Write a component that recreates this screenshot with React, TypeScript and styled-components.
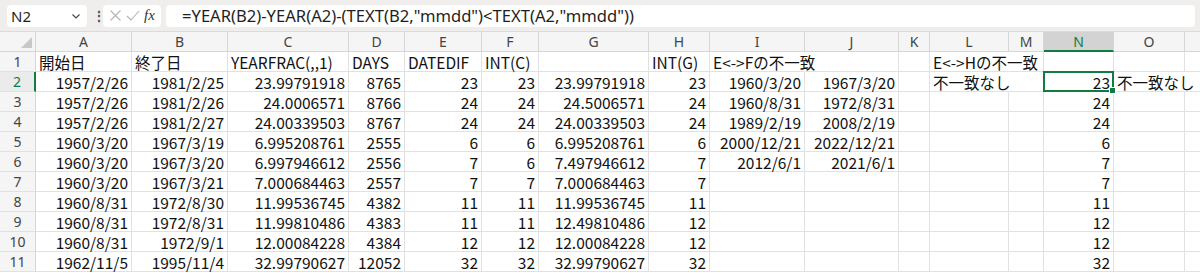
import React from 'react';
import styled, { createGlobalStyle, css } from 'styled-components';

const GlobalStyle = createGlobalStyle`
  html, body { margin: 0; padding: 0; background: #ffffff; }
  body { width: 1200px; height: 273px; overflow: hidden; }
`;

const COLS = [96, 96, 121, 56, 77, 57, 110, 61, 95, 94, 31, 79, 35, 70, 71, 64];
// the last column is only partly in view, so its letter is off-screen
const LETTERS = ['A', 'B', 'C', 'D', 'E', 'F', 'G', 'H', 'I', 'J', 'K', 'L', 'M', 'N', 'O', ''];
const GREEN = '#107c41';

type Cell = { v?: string; left?: boolean; spill?: boolean };

const n = (v: string): Cell => ({ v });
const t = (v: string, spill = false): Cell => ({ v, left: true, spill });
const e: Cell = {};

const ROWS: Cell[][] = [
  [t('開始日'), t('終了日'), t('YEARFRAC(,,1)'), t('DAYS'), t('DATEDIF'), t('INT(C)'), e, t('INT(G)'), t('E<->Fの不一致', true), e, e, t('E<->Hの不一致', true), e, e, e, e],
  [n('1957/2/26'), n('1981/2/25'), n('23.99791918'), n('8765'), n('23'), n('23'), n('23.99791918'), n('23'), n('1960/3/20'), n('1967/3/20'), e, t('不一致なし', true), e, n('23'), t('不一致なし', true), e],
  [n('1957/2/26'), n('1981/2/26'), n('24.0006571'), n('8766'), n('24'), n('24'), n('24.5006571'), n('24'), n('1960/8/31'), n('1972/8/31'), e, e, e, n('24'), e, e],
  [n('1957/2/26'), n('1981/2/27'), n('24.00339503'), n('8767'), n('24'), n('24'), n('24.00339503'), n('24'), n('1989/2/19'), n('2008/2/19'), e, e, e, n('24'), e, e],
  [n('1960/3/20'), n('1967/3/19'), n('6.995208761'), n('2555'), n('6'), n('6'), n('6.995208761'), n('6'), n('2000/12/21'), n('2022/12/21'), e, e, e, n('6'), e, e],
  [n('1960/3/20'), n('1967/3/20'), n('6.997946612'), n('2556'), n('7'), n('6'), n('7.497946612'), n('7'), n('2012/6/1'), n('2021/6/1'), e, e, e, n('7'), e, e],
  [n('1960/3/20'), n('1967/3/21'), n('7.000684463'), n('2557'), n('7'), n('7'), n('7.000684463'), n('7'), e, e, e, e, e, n('7'), e, e],
  [n('1960/8/31'), n('1972/8/30'), n('11.99536745'), n('4382'), n('11'), n('11'), n('11.99536745'), n('11'), e, e, e, e, e, n('11'), e, e],
  [n('1960/8/31'), n('1972/8/31'), n('11.99810486'), n('4383'), n('11'), n('11'), n('12.49810486'), n('12'), e, e, e, e, e, n('12'), e, e],
  [n('1960/8/31'), n('1972/9/1'), n('12.00084228'), n('4384'), n('12'), n('12'), n('12.00084228'), n('12'), e, e, e, e, e, n('12'), e, e],
  [n('1962/11/5'), n('1995/11/4'), n('32.99790627'), n('12052'), n('32'), n('32'), n('32.99790627'), n('32'), e, e, e, e, e, n('32'), e, e],
];

const Page = styled.div`
  width: 1200px;
  height: 273px;
  overflow: hidden;
  display: flex;
  flex-direction: column;
`;

const FormulaBar = styled.div`
  height: 32px;
  flex: none;
  box-sizing: border-box;
  display: flex;
  align-items: center;
  gap: 5px;
  padding: 4px 5px 4px 7px;
  background: #efeeed;
  border-bottom: 1px solid #dcdbda;
  font-family: 'Noto Sans', 'Open Sans', sans-serif;
  color: #1f1f1f;
`;

const Box = styled.div<{ $w?: number; $grow?: boolean }>`
  height: 22px;
  box-sizing: border-box;
  background: #ffffff;
  border-radius: 4px;
  display: flex;
  align-items: center;
  ${(p) => (p.$grow ? css`flex: 1;` : css`width: ${p.$w}px; flex: none;`)}
`;

const NameText = styled.span`
  flex: 1;
  padding-left: 4px;
  font-size: 15px;
`;

const Chevron = styled.svg`
  width: 10px;
  height: 10px;
  margin-right: 6px;
`;

const Dots = styled.span`
  width: 6px;
  font-size: 14px;
  color: #555;
  text-align: center;
  font-weight: bold;
`;

const IconRow = styled(Box)`
  justify-content: space-around;
  padding: 0 4px;
`;

const Fx = styled.span`
  font-family: 'Liberation Serif', serif;
  font-style: italic;
  font-size: 15px;
  color: #333;
`;

const FormulaText = styled.span`
  padding-left: 16px;
  font-size: 16.6px;
  white-space: pre;
`;

const Grid = styled.div`
  display: grid;
  grid-template-columns: 36px ${COLS.map((w) => `${w}px`).join(' ')};
  grid-auto-rows: 20px;
  background: #ffffff;
`;

const Corner = styled.div`
  background: #f5f5f5;
  border-right: 1px solid #d6d6d6;
  border-bottom: 1px solid #d6d6d6;
  box-sizing: border-box;
  display: flex;
  align-items: flex-end;
  justify-content: flex-end;
  padding: 0 3px 3px 0;
`;

const ColHead = styled.div<{ $sel?: boolean }>`
  box-sizing: border-box;
  background: ${(p) => (p.$sel ? '#d3d3d3' : '#f5f5f5')};
  border-right: 1px solid #d6d6d6;
  border-bottom: ${(p) => (p.$sel ? `2px solid ${GREEN}` : '1px solid #d6d6d6')};
  color: ${(p) => (p.$sel ? GREEN : '#444')};
  font-family: 'Noto Sans', 'Open Sans', sans-serif;
  font-size: 14px;
  line-height: 20px;
  text-align: center;
`;

const RowHead = styled.div<{ $sel?: boolean }>`
  box-sizing: border-box;
  background: ${(p) => (p.$sel ? '#ebebeb' : '#f5f5f5')};
  border-right: ${(p) => (p.$sel ? `2px solid ${GREEN}` : '1px solid #d6d6d6')};
  border-bottom: 1px solid #e1e1e1;
  color: ${(p) => (p.$sel ? GREEN : '#444')};
  font-family: 'Noto Sans', 'Open Sans', sans-serif;
  font-size: 14px;
  line-height: 20px;
  text-align: center;
`;

const DataCell = styled.div<{ $left?: boolean; $spill?: boolean; $active?: boolean }>`
  position: relative;
  box-sizing: border-box;
  border-right: 1px solid ${(p) => (p.$spill ? 'transparent' : '#e1e1e1')};
  border-bottom: 1px solid #e1e1e1;
  font-family: 'Noto Sans CJK JP', 'Noto Sans', sans-serif;
  font-size: 15.5px;
  line-height: 20px;
  color: #111;
  white-space: nowrap;
  overflow: visible;
  text-align: ${(p) => (p.$left ? 'left' : 'right')};
  padding: ${(p) => (p.$left ? '0 0 0 3px' : '0 3px 0 0')};
  ${(p) =>
    p.$active &&
    css`
      &::after {
        content: '';
        position: absolute;
        left: -1px;
        top: -1px;
        right: -1px;
        bottom: -1px;
        border: 2px solid ${GREEN};
      }
      &::before {
        content: '';
        position: absolute;
        right: -3px;
        bottom: -3px;
        width: 5px;
        height: 5px;
        background: ${GREEN};
        border: 1px solid #fff;
        z-index: 2;
      }
    `}
`;

export default function App() {
  return (
    <Page>
      <GlobalStyle />
      <FormulaBar>
        <Box $w={80}>
          <NameText>N2</NameText>
          <Chevron viewBox="0 0 10 10">
            <path d="M1.5 3.5 L5 7 L8.5 3.5" fill="none" stroke="#444" strokeWidth="1.1" />
          </Chevron>
        </Box>
        <Dots>⋮</Dots>
        <IconRow $w={58}>
          <svg width="13" height="13" viewBox="0 0 13 13">
            <path d="M1.5 1.5 L11.5 11.5 M11.5 1.5 L1.5 11.5" stroke="#b4b4b4" strokeWidth="1.1" />
          </svg>
          <svg width="14" height="13" viewBox="0 0 14 13">
            <path d="M1 7 L5 11 L13 2" fill="none" stroke="#b4b4b4" strokeWidth="1.1" />
          </svg>
          <Fx>fx</Fx>
        </IconRow>
        <Box $grow>
          <FormulaText>=YEAR(B2)-YEAR(A2)-(TEXT(B2,"mmdd")&lt;TEXT(A2,"mmdd"))</FormulaText>
        </Box>
      </FormulaBar>
      <Grid>
        <Corner>
          <svg width="11" height="11" viewBox="0 0 11 11">
            <path d="M11 0 L11 11 L0 11 Z" fill="#c8c8c8" />
          </svg>
        </Corner>
        {LETTERS.map((l, i) => (
          <ColHead key={i} $sel={l === 'N'}>
            {l}
          </ColHead>
        ))}
        {ROWS.map((row, r) => (
          <React.Fragment key={r}>
            <RowHead $sel={r === 1}>{r + 1}</RowHead>
            {row.map((c, ci) => (
              <DataCell key={ci} $left={c.left} $spill={c.spill} $active={r === 1 && ci === 13}>
                {c.v}
              </DataCell>
            ))}
          </React.Fragment>
        ))}
      </Grid>
    </Page>
  );
}
